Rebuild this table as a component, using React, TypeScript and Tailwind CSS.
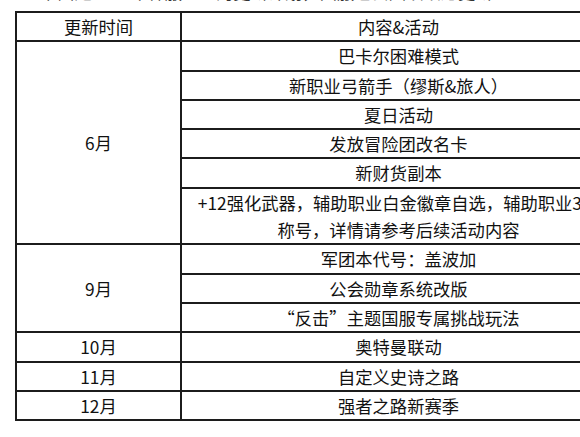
const rows6 = [
  '巴卡尔困难模式',
  '新职业弓箭手（缪斯&旅人）',
  '夏日活动',
  '发放冒险团改名卡',
  '新财货副本',
];

const rows9 = ['军团本代号：盖波加', '公会勋章系统改版', '“反击”主题国服专属挑战玩法'];

const singles = [
  { month: '10月', text: '奥特曼联动' },
  { month: '11月', text: '自定义史诗之路' },
  { month: '12月', text: '强者之路新赛季' },
];

const cell = 'border-2 border-[#1c1c1c] px-2 py-0 text-center leading-[27.3px] align-middle';

export default function App() {
  return (
    <div
      className="relative h-[437px] w-[580px] overflow-hidden bg-white text-[17.3px] text-[#111]"
      style={{ fontFamily: '"Noto Sans CJK SC", "Noto Sans", sans-serif' }}
    >
      {/* caption above the table, only its bottom edge shows */}
      <p className="mt-[-20px] h-[24px] whitespace-nowrap pl-[40px] leading-[24px] text-[#333]">
        下面是2024年韩服DNF的更新计划，国服也会陆续跟进更新
      </p>
      <table className="ml-[15px] mt-[7px] w-[600px] table-fixed border-collapse">
        <colgroup>
          <col className="w-[165px]" />
          <col className="w-[435px]" />
        </colgroup>
        <thead>
          <tr>
            <th className={`${cell} font-normal`}>更新时间</th>
            <th className={`${cell} font-normal`}>内容&amp;活动</th>
          </tr>
        </thead>
        <tbody>
          <tr>
            <td className={cell} rowSpan={6}>
              6月
            </td>
            <td className={cell}>{rows6[0]}</td>
          </tr>
          {rows6.slice(1).map((t) => (
            <tr key={t}>
              <td className={cell}>{t}</td>
            </tr>
          ))}
          <tr>
            <td className={`${cell} whitespace-nowrap`}>
              +12强化武器，辅助职业白金徽章自选，辅助职业3觉
              <br />
              称号，详情请参考后续活动内容
            </td>
          </tr>
          <tr>
            <td className={cell} rowSpan={3}>
              9月
            </td>
            <td className={cell}>{rows9[0]}</td>
          </tr>
          {rows9.slice(1).map((t) => (
            <tr key={t}>
              <td className={cell}>{t}</td>
            </tr>
          ))}
          {singles.map((r) => (
            <tr key={r.month}>
              <td className={cell}>{r.month}</td>
              <td className={cell}>{r.text}</td>
            </tr>
          ))}
        </tbody>
      </table>
    </div>
  );
}
